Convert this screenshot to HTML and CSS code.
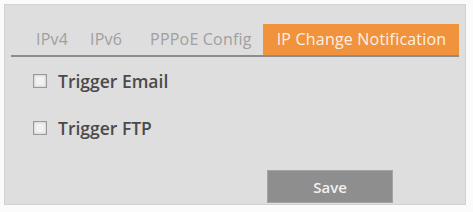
FILE: index.html
```html
<!DOCTYPE html>
<html>
<head>
<meta charset="utf-8">
<link rel="stylesheet" href="styles.css">
</head>
<body>
<div class="panel">
  <div class="tabs">
    <span class="tab t1">IPv4</span>
    <span class="tab t2">IPv6</span>
    <span class="tab t3">PPPoE Config</span>
    <span class="tab active">IP Change Notification</span>
  </div>
  <div class="content">
    <label class="row"><span class="box"></span><span class="lbl">Trigger Email</span></label>
    <label class="row r2"><span class="box"></span><span class="lbl">Trigger FTP</span></label>
    <div class="actions"><button class="save">Save</button></div>
  </div>
</div>
</body>
</html>
```

FILE: styles.css
```css
html, body { margin: 0; padding: 0; background: #fbfbfb; }
body { width: 473px; height: 212px; overflow: hidden; font-family: "Open Sans", "Liberation Sans", sans-serif; }
.panel {
  margin: 4px 0 0 4px;
  width: 462px;
  height: 201px;
  background: #dedede;
  border: 1px solid #d2d2d2;
  box-sizing: border-box;
  padding: 0 6px;
}
.tabs {
  display: flex;
  align-items: flex-end;
  height: 50px;
  border-bottom: 2px solid #8c8c8c;
  padding-left: 25px;
  white-space: nowrap;
}
.tab {
  flex-shrink: 0;
  font-size: 16px;
  letter-spacing: 0.2px;
  color: #a0a0a0;
  height: 31px;
  line-height: 30px;
  margin-right: 22px;
}
.tab.t2 { margin-right: 28px; }
.tab.t3 { margin-right: 11px; }
.tab.active {
  background: #f0933c;
  color: #fcf0e4;
  padding: 0 13px 0 14px;
  margin-right: 0;
}
.content { padding: 15px 0 0 22px; }
.row { display: flex; align-items: center; height: 18px; }
.r2 { margin-top: 29px; }
.box {
  width: 12px; height: 12px;
  border: 1px solid #9a9a9a;
  background: #f2f2f2;
  box-shadow: inset 0 0 3px #bbb;
  margin-right: 11px;
}
.lbl { font-size: 17.5px; font-weight: 600; color: #4a4a4a; }
.actions { display: flex; padding: 33px 0 0 234px; }
.save {
  width: 126px; height: 33px;
  background: #8e8e8e;
  border: 1px solid #a4a4a4;
  color: #f2f2f2;
  font-family: "Open Sans", "Liberation Sans", sans-serif;
  font-size: 15px;
  font-weight: 600;
}
```
